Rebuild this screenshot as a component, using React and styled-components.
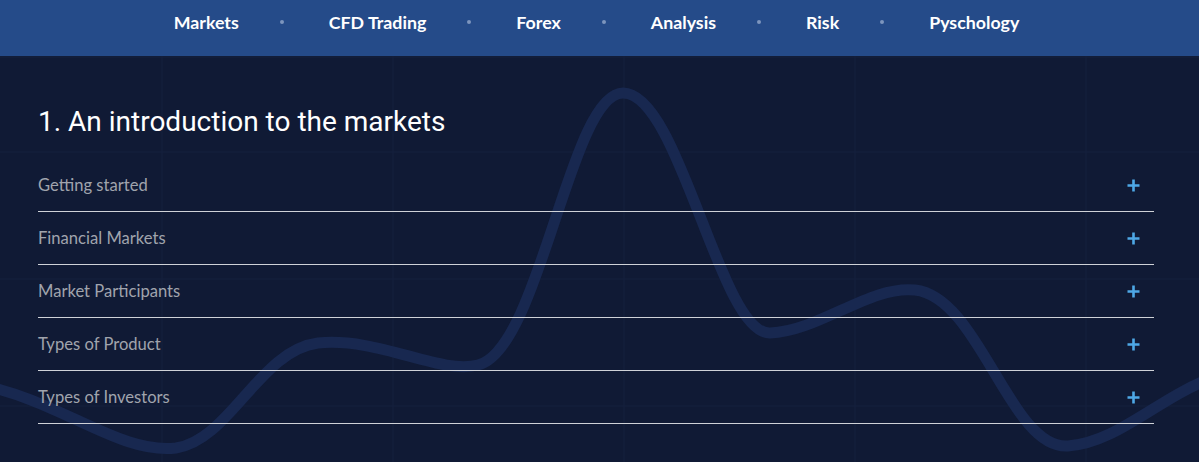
import React from "react";
import styled, { createGlobalStyle } from "styled-components";

const GlobalStyle = createGlobalStyle`
  html, body { margin: 0; padding: 0; background: #101a35; }
  * { box-sizing: border-box; }
`;

const Page = styled.div`
  width: 1199px;
  height: 462px;
  overflow: hidden;
  background: #101a35;
  display: flex;
  flex-direction: column;
`;

const Nav = styled.nav`
  height: 56px;
  flex: none;
  background: #254b89;
  display: flex;
  align-items: center;
  justify-content: center;
  padding-bottom: 12px;
  padding-right: 6px;
`;

const NavLink = styled.a`
  font-family: Lato, "Open Sans", sans-serif;
  font-weight: 700;
  font-size: 17.8px;
  color: #ffffff;
  text-decoration: none;
`;

const Dot = styled.span`
  width: 4px;
  height: 4px;
  margin: 0 45px 0 41px;
  border-radius: 50%;
  background: #7d95bd;
`;

const Main = styled.main`
  position: relative;
  flex: 1;
  padding: 50px 45px 0 38px;
`;

const Backdrop = styled.svg`
  position: absolute;
  inset: 0;
  width: 100%;
  height: 100%;
  pointer-events: none;
`;

const Content = styled.div`
  position: relative;
  display: flex;
  flex-direction: column;
`;

const Heading = styled.h1`
  margin: 0 0 21px;
  font-family: Roboto, "Liberation Sans", sans-serif;
  font-weight: 400;
  font-size: 28px;
  line-height: 32px;
  color: #ffffff;
`;

const List = styled.ul`
  list-style: none;
  margin: 0;
  padding: 0;
`;

const Row = styled.li`
  height: 53px;
  border-bottom: 1px solid #cfd2d8;
  display: flex;
  align-items: center;
  justify-content: space-between;
  padding: 0 14px 0 0;
`;

const RowLabel = styled.span`
  font-family: Lato, "Open Sans", sans-serif;
  font-size: 16.6px;
  color: #a0a4ad;
`;

const Plus = () => (
  <svg width="13" height="13" viewBox="0 0 13 13">
    <path d="M6.5 0.5v12M0.5 6.5h12" stroke="#4ea8e6" strokeWidth="2.6" />
  </svg>
);

const navItems = ["Markets", "CFD Trading", "Forex", "Analysis", "Risk", "Pyschology"];
const rows = [
  "Getting started",
  "Financial Markets",
  "Market Participants",
  "Types of Product",
  "Types of Investors",
];

export default function App() {
  return (
    <>
      <GlobalStyle />
      <Page>
        <Nav>
          {navItems.map((item, i) => (
            <React.Fragment key={item}>
              {i > 0 && <Dot />}
              <NavLink href="#">{item}</NavLink>
            </React.Fragment>
          ))}
        </Nav>
        <Main>
          <Backdrop viewBox="0 0 1199 406" preserveAspectRatio="none">
            <g stroke="#15213e" strokeWidth="1">
              {[162, 393, 624, 855, 1086].map((x) => (
                <line key={x} x1={x} y1="0" x2={x} y2="406" />
              ))}
              {[1, 96, 223, 350].map((y) => (
                <line key={y} x1="0" y1={y} x2="1199" y2={y} />
              ))}
            </g>
            <path
              d="M -20 329 C 60 344, 120 399, 176 392 C 230 384, 260 294, 318 287 C 380 281, 440 319, 478 309 C 540 294, 570 37, 623 37 C 680 37, 720 279, 770 277 C 820 275, 870 229, 915 234 C 980 241, 1010 394, 1068 390 C 1120 386, 1160 339, 1220 319"
              fill="none"
              stroke="#182850"
              strokeWidth="11"
              strokeLinecap="round"
            />
          </Backdrop>
          <Content>
            <Heading>1. An introduction to the markets</Heading>
            <List>
              {rows.map((r) => (
                <Row key={r}>
                  <RowLabel>{r}</RowLabel>
                  <Plus />
                </Row>
              ))}
            </List>
          </Content>
        </Main>
      </Page>
    </>
  );
}
